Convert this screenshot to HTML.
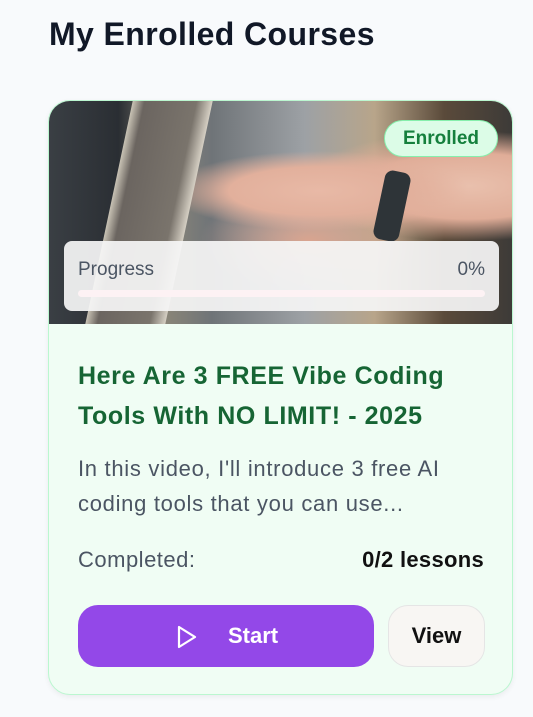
<!DOCTYPE html>
<html><head><style>
*{margin:0;padding:0;box-sizing:border-box}
body{width:533px;height:717px;background:#f8fafc;font-family:"Liberation Sans",sans-serif;overflow:hidden;position:relative}
h1{position:absolute;left:49px;top:16px;font-size:32px;font-weight:bold;color:#111827;letter-spacing:0.4px}
.card{position:absolute;left:48px;top:100px;width:465px;height:595px;border-radius:22px;background:#f0fdf4;border:1px solid #bbf7d0;overflow:hidden;box-shadow:0 2px 6px rgba(0,0,0,0.06)}
.img{position:absolute;left:0;top:0;width:465px;height:223px;background:
radial-gradient(ellipse 150px 40px at 270px 90px,#e8b9a6 0%,#e2b09c 60%,transparent 100%),
radial-gradient(ellipse 170px 55px at 420px 85px,#e9c0ad 0%,#e0ad98 60%,transparent 100%),
radial-gradient(ellipse 110px 50px at 260px 140px,#d9a48f 0%,transparent 100%),
linear-gradient(90deg,#3a3f44 0%,#2a2e33 15%,#8a8578 25%,#6f7478 35%,#9da1a5 55%,#b8a58a 70%,#5a4a3a 85%,#3c3a38 100%)}
.tab{position:absolute;left:60px;top:0;width:80px;height:223px;background:linear-gradient(90deg,#c9c3b5,#6b6560 15%,#7a746c 80%,#d6d0c4);transform:skewX(-12deg)}
.band{position:absolute;left:330px;top:70px;width:26px;height:70px;background:#2e3438;border-radius:8px;transform:rotate(12deg)}
.badge{position:absolute;left:335px;top:19px;width:114px;height:37px;border-radius:19px;background:#dcfce7;border:1px solid #86efac;color:#15803d;font-weight:bold;font-size:19px;text-align:center;line-height:35px}
.prog{position:absolute;left:15px;top:140px;width:435px;height:70px;border-radius:8px;background:rgba(245,245,245,0.93)}
.prog .l{position:absolute;left:14px;top:18px;font-size:19px;color:#4b5563}
.prog .r{position:absolute;right:14px;top:18px;font-size:19px;color:#4b5563}
.prog .bar{position:absolute;left:14px;top:49px;width:407px;height:7px;border-radius:4px;background:#fdf2f4}
.title{position:absolute;left:29px;top:255px;width:400px;font-size:25px;line-height:40px;font-weight:bold;color:#166534;letter-spacing:0.6px}
.desc{position:absolute;left:29px;top:350px;width:400px;font-size:22px;line-height:35px;color:#4b5563;letter-spacing:0.7px}
.c1{position:absolute;left:29px;top:446px;font-size:22px;color:#4b5563;letter-spacing:0.5px}
.c2{position:absolute;right:28px;top:446px;font-size:22px;font-weight:bold;color:#111;letter-spacing:0.3px}
.start{position:absolute;left:29px;top:504px;width:296px;height:62px;border-radius:20px;background:#9348e8;color:#fff;font-weight:bold;font-size:22px}
.start svg{position:absolute;left:98px;top:20px}
.start span{position:absolute;left:150px;top:18px}
.view{position:absolute;left:339px;top:504px;width:97px;height:62px;border-radius:20px;background:#f8f6f3;border:1px solid #e5e5e5;font-weight:bold;font-size:22px;color:#111;text-align:center;line-height:60px}
</style></head><body>
<h1>My Enrolled Courses</h1>
<div class="card">
<div class="img"><div class="tab"></div><div class="band"></div>
<div class="badge">Enrolled</div>
<div class="prog"><span class="l">Progress</span><span class="r">0%</span><div class="bar"></div></div>
</div>
<div class="title">Here Are 3 FREE Vibe Coding Tools With NO LIMIT! - 2025</div>
<div class="desc">In this video, I'll introduce 3 free AI coding tools that you can use...</div>
<div class="c1">Completed:</div><div class="c2">0/2 lessons</div>
<div class="start"><svg width="22" height="24" viewBox="0 0 22 24"><path d="M3 2 L19 12 L3 22 Z" fill="none" stroke="#fff" stroke-width="2.2" stroke-linejoin="round"/></svg><span>Start</span></div>
<div class="view">View</div>
</div>
</body></html>
